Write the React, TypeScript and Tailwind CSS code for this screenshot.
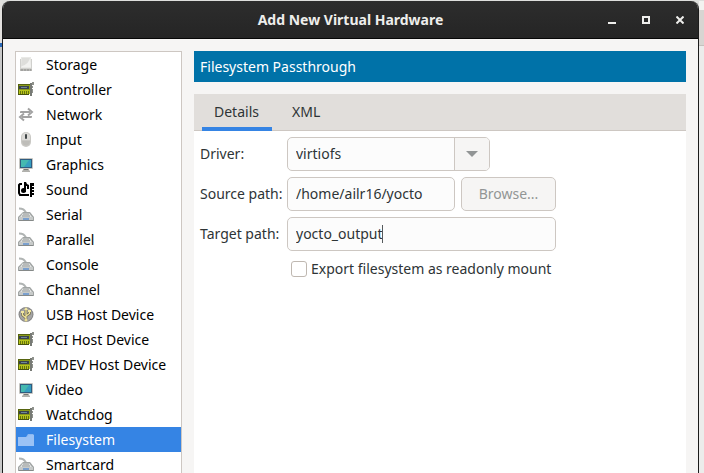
import type { ReactNode } from "react";

type IconName = "disk" | "card" | "arrows" | "mouse" | "screen" | "sound" | "modem" | "usb" | "folder";

const devices: { label: string; icon: IconName }[] = [
  { label: "Storage", icon: "disk" },
  { label: "Controller", icon: "card" },
  { label: "Network", icon: "arrows" },
  { label: "Input", icon: "mouse" },
  { label: "Graphics", icon: "screen" },
  { label: "Sound", icon: "sound" },
  { label: "Serial", icon: "modem" },
  { label: "Parallel", icon: "modem" },
  { label: "Console", icon: "modem" },
  { label: "Channel", icon: "modem" },
  { label: "USB Host Device", icon: "usb" },
  { label: "PCI Host Device", icon: "card" },
  { label: "MDEV Host Device", icon: "card" },
  { label: "Video", icon: "screen" },
  { label: "Watchdog", icon: "card" },
  { label: "Filesystem", icon: "folder" },
  { label: "Smartcard", icon: "modem" },
];

const drawings: Record<IconName, ReactNode> = {
  disk: (
    <>
      <path d="M3 0h10l1 11v2.500H2V11z" fill="#e9e9e6" />
      <path d="M4 1h8l1 9H3z" fill="#dededb" />
      <path d="M4 9c4-1 7-4 8-8l1 9H3z" fill="#f2f2f0" />
      <path d="M2.500 2v9M13.500 2v9" stroke="#d0d0cd" />
      <path d="M2 11.500h12V14H2z" fill="#b9b9b6" />
      <path d="M3 13h10" stroke="#8e8e8b" strokeDasharray="2 1" />
    </>
  ),
  card: (
    <>
      <path d="M0 2h13v10H0z" fill="#56640f" />
      <path d="M1 3h11v8H1z" fill="#8a9a1c" />
      <path d="M1 4h10v3H1z" fill="#39434c" />
      <path d="M3 5h6v1H3z" fill="#6f8796" />
      <path d="M1 8h11v4H1z" fill="#b6c41a" />
      <path d="M2.500 9v3M4.500 9v3M6.500 9v3M8.500 9v3M10.500 9v3" stroke="#66740f" />
      <path d="M0 12.500h11" stroke="#48530d" />
      <path d="M12 1h2v13h-2z" fill="#777a75" />
      <path d="M14 0h2v3h-2zM14 4h1v2h-1zM14 7h1v4h-1z" fill="#8f928c" />
    </>
  ),
  arrows: (
    <>
      <path d="M2 6V5q0-1 1-1h9v2zM14 9v1q0 1-1 1H4V9z" fill="#a2a2a2" />
      <path d="M10 1.500L14 5l-4 3.500M6 6.500L2 10l4 3.500" fill="none" stroke="#a2a2a2" strokeWidth="2" />
    </>
  ),
  mouse: (
    <>
      <rect x="3" y="0" width="10" height="15" rx="5" fill="#c9c8c4" />
      <path d="M4 5c0-6 8-6 8 0v3H4z" fill="#dcdbd8" />
      <path d="M4 9h8c0 6-8 6-8 0z" fill="#bebdb9" />
      <rect x="7" y="2" width="2" height="5" rx="1" fill="#3f4547" />
    </>
  ),
  screen: (
    <>
      <rect x="1" y="1" width="14" height="11" rx="1" fill="#c5c5c0" />
      <path d="M2 2h12v9H2z" fill="#2f5c80" />
      <path d="M3 3h10v7H3z" fill="#359ec0" />
      <path d="M3 3h8L6 10H3z" fill="#45b9b0" />
      <path d="M5 12h6v1l1 1v1H4v-1l1-1z" fill="#b1b1ad" />
      <path d="M6 12h4v1H6z" fill="#777975" />
    </>
  ),
  sound: (
    <>
      <path d="M4 2H2L1 3v8l1 2h9" fill="none" stroke="#000" strokeWidth="2" />
      <path d="M6 0h2l1 2 2 1v4H9V4H8v6H6z" />
      <circle cx="5.500" cy="8.500" r="2.500" />
      <path d="M12 1h4v3h-2v1h2v2h-2v1h2v2h-2v1h2v2h-2v2h-2z" />
    </>
  ),
  modem: (
    <>
      <path d="M1 1.500c4 0 5 1 7 4" fill="none" stroke="#b0b4b3" strokeWidth="2" />
      <path d="M5 5h7l4 5v4H0v-4z" fill="#a1a5a4" />
      <path d="M5 6h6l3 4H2z" fill="#e4e6e5" />
      <path d="M5 7h6M4 9h8" stroke="#8d9190" />
      <path d="M1 10h14v3H1z" fill="#c7cac9" />
      <path d="M5 11h6v2H5z" fill="#7ba0ce" />
      <path d="M1 13.500h14" stroke="#858988" />
    </>
  ),
  usb: (
    <>
      <circle cx="8" cy="7.500" r="7.500" fill="#858585" />
      <circle cx="8" cy="7.500" r="6.500" fill="#a5a5a5" />
      <path d="M8 13V2M8 11L4.500 8V5M8 9l3.500-2.500V4" fill="none" stroke="#6f6a4a" strokeWidth="2.500" />
      <path d="M8 13V2M8 11L4.500 8V5M8 9l3.500-2.500V4" fill="none" stroke="#f2e69f" strokeWidth="1.200" />
      <path d="M8 0l2 3H6zM3 4h3v2H3zM10 3h3v2h-3z" fill="#f2e69f" />
      <circle cx="8" cy="13" r="1.500" fill="#e9dc93" />
    </>
  ),
  folder: (
    <>
      <path d="M0 5h8l2-3h5l1 1v11H0z" fill="#8cb8f0" />
      <path d="M0 5h9l2-2h5v11H0z" fill="#9bc2f5" />
    </>
  ),
};

function DeviceIcon({ name }: { name: IconName }) {
  return (
    <svg viewBox="0 0 16 16" className="size-4 shrink-0" aria-hidden="true">
      {drawings[name]}
    </svg>
  );
}

const field = "h-[34px] rounded-[5px] border border-[#cdc7c2] bg-[#fcfcfc] px-2 outline-none";
const tab = "-mb-px w-[70px] border-b-4 px-3 pt-0.5 text-left";

export default function App() {
  return (
    <div className="flex h-screen overflow-hidden bg-[#dedfdd] pt-px font-['Noto_Sans','Open_Sans',sans-serif] text-sm text-[#2e3436]">
      <div className="flex w-0.5 shrink-0 flex-col">
        <div className="h-[42px] bg-[#e3e1df]" />
        <div className="h-1 bg-[#2868b8]" />
        <div className="flex-1 bg-[#c9c9c9]" />
      </div>

      <div className="flex min-w-0 flex-1 flex-col overflow-hidden rounded-t-lg border-x border-[#1c1c1c] bg-[#f6f5f4]">
        <header className="grid h-[38px] shrink-0 grid-cols-[1fr_auto_1fr] items-center border-b border-[#070707] bg-linear-to-b from-[#2d2d2d] to-[#252525] text-[#eeeeec]">
          <h1 className="col-start-2 font-bold">Add New Virtual Hardware</h1>
          <div className="flex justify-end gap-2.5 pr-1.5">
            <button type="button" aria-label="Minimize" className="flex size-6 items-center justify-center">
              <svg viewBox="0 0 8 8" className="size-2"><path d="M0 6h8v2H0z" fill="currentColor" /></svg>
            </button>
            <button type="button" aria-label="Maximize" className="flex size-6 items-center justify-center">
              <svg viewBox="0 0 8 8" className="size-2"><path d="M1 1h6v6H1z" fill="none" stroke="currentColor" strokeWidth="2" /></svg>
            </button>
            <button type="button" aria-label="Close" className="flex size-6 items-center justify-center">
              <svg viewBox="0 0 8 8" className="size-2"><path d="M.5.5l7 7M7.500.5l-7 7" stroke="currentColor" strokeWidth="2" /></svg>
            </button>
          </div>
        </header>

        <div className="flex min-h-0 flex-1 gap-3 px-3 pt-3">
          <ul className="w-[167px] shrink-0 overflow-hidden border border-b-0 border-[#cdc7c2] bg-white text-black">
            {devices.map(({ label, icon }) => (
              <li key={label}>
                <button
                  type="button"
                  className={`flex h-[25px] w-full items-center gap-3 px-0.5 text-left whitespace-nowrap ${
                    label === "Filesystem" ? "bg-[#3584e4] text-white" : ""
                  }`}
                >
                  <DeviceIcon name={icon} />
                  {label}
                </button>
              </li>
            ))}
          </ul>

          <main className="flex min-w-0 flex-1 flex-col">
            <h2 className="flex h-[31px] shrink-0 items-center bg-[#0072a8] px-1.5 text-white">Filesystem Passthrough</h2>

            <div role="tablist" className="mt-3 flex h-[37px] shrink-0 gap-2 border-b border-[#cdc7c2] bg-[#e1dedb] px-2">
              <button type="button" role="tab" aria-selected="true" className={`${tab} border-[#3584e4]`}>
                Details
              </button>
              <button type="button" role="tab" aria-selected="false" className={`${tab} border-transparent`}>
                XML
              </button>
            </div>

            <form className="flex-1 bg-white px-1.5 pt-1.5">
              <div className="grid grid-cols-[81px_168px_95px] items-center gap-1.5">
                <label htmlFor="driver">Driver:</label>
                <div className="relative col-span-2 w-[203px]">
                  <select id="driver" className={`${field} block w-full appearance-none`}>
                    <option>virtiofs</option>
                  </select>
                  <span className="pointer-events-none absolute inset-y-px right-px flex w-[35px] items-center justify-center rounded-r border-l border-[#cdc7c2] bg-[#f6f5f4]">
                    <svg viewBox="0 0 12 6" className="h-1.5 w-3"><path d="M0 0h12L6 6z" fill="#929595" /></svg>
                  </span>
                </div>

                <label htmlFor="source" className="whitespace-nowrap">Source path:</label>
                <input id="source" className={`${field} w-full pb-0.5`} defaultValue="/home/ailr16/yocto" />
                <button type="button" disabled className="h-[34px] rounded-[5px] border border-[#cdc7c2] bg-[#f6f5f4] text-[#929595]">
                  Browse...
                </button>

                <label htmlFor="target" className="whitespace-nowrap">Target path:</label>
                <div className="relative col-span-2">
                  <input id="target" className={`${field} block w-full pb-0.5`} defaultValue="yocto_output" />
                  <span className="absolute top-2 left-[95px] h-[18px] w-px bg-[#555a5c]" />
                </div>
              </div>

              <label className="mt-2 ml-[91px] flex items-center gap-1 whitespace-nowrap">
                <input type="checkbox" className="size-4 appearance-none rounded-[3px] border border-[#bfb8b1] bg-white" />
                Export filesystem as readonly mount
              </label>
            </form>
          </main>
        </div>
      </div>

      <div className="flex w-[5px] shrink-0 flex-col">
        <div className="h-[9px] bg-[#f3f2f0]" />
        <div className="h-9 border-b border-[#c5c1bd] bg-[#d8d5d2]" />
        <div className="flex-1 bg-[#ececeb]" />
      </div>
    </div>
  );
}
